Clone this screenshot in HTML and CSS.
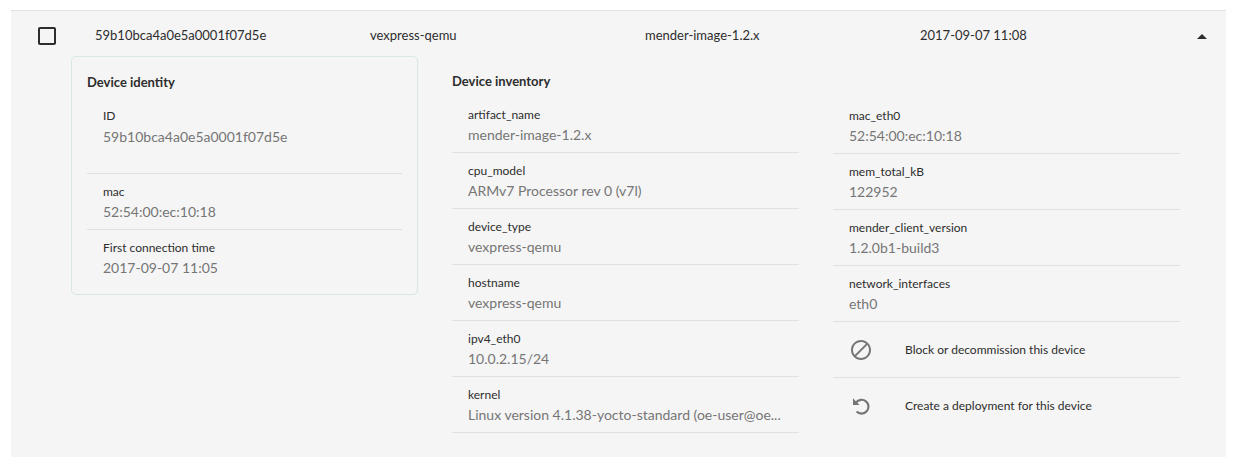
FILE: index.html
```html
<!DOCTYPE html>
<html lang="en">
<head>
<meta charset="utf-8">
<title>Devices</title>
<link rel="stylesheet" href="styles.css">
</head>
<body>
<section class="device">
  <header class="summary">
    <span class="check"><svg width="24" height="24" viewBox="0 0 24 24"><path d="M19 5v14H5V5h14m0-2H5c-1.100 0-2 .900-2 2v14c0 1.100.900 2 2 2h14c1.100 0 2-.900 2-2V5c0-1.100-.900-2-2-2z"/></svg></span>
    <span class="cell">59b10bca4a0e5a0001f07d5e</span>
    <span class="cell">vexpress-qemu</span>
    <span class="cell">mender-image-1.2.x</span>
    <span class="cell">2017-09-07 11:08</span>
    <span class="arrow"><svg width="24" height="24" viewBox="0 0 24 24"><path d="M7 14l5-5 5 5z"/></svg></span>
  </header>
  <div class="details">
    <div class="identity">
      <h4 class="title">Device identity</h4>
      <ul class="list">
        <li class="item item-id"><div class="label">ID</div><div class="value">59b10bca4a0e5a0001f07d5e</div></li>
        <li class="item"><div class="label">mac</div><div class="value">52:54:00:ec:10:18</div></li>
        <li class="item"><div class="label">First connection time</div><div class="value">2017-09-07 11:05</div></li>
      </ul>
    </div>
    <div class="inventory">
      <h4 class="title">Device inventory</h4>
      <ul class="list">
        <li class="item"><div class="label">artifact_name</div><div class="value">mender-image-1.2.x</div></li>
        <li class="item"><div class="label">cpu_model</div><div class="value">ARMv7 Processor rev 0 (v7l)</div></li>
        <li class="item"><div class="label">device_type</div><div class="value">vexpress-qemu</div></li>
        <li class="item"><div class="label">hostname</div><div class="value">vexpress-qemu</div></li>
        <li class="item"><div class="label">ipv4_eth0</div><div class="value">10.0.2.15/24</div></li>
        <li class="item"><div class="label">kernel</div><div class="value">Linux version 4.1.38-yocto-standard (oe-user@oe...</div></li>
      </ul>
    </div>
    <div class="inventory inventory-more">
      <ul class="list">
        <li class="item"><div class="label">mac_eth0</div><div class="value">52:54:00:ec:10:18</div></li>
        <li class="item"><div class="label">mem_total_kB</div><div class="value">122952</div></li>
        <li class="item"><div class="label">mender_client_version</div><div class="value">1.2.0b1-build3</div></li>
        <li class="item"><div class="label">network_interfaces</div><div class="value">eth0</div></li>
        <li class="item action"><svg width="24" height="24" viewBox="0 0 24 24"><path d="M12 2C6.480 2 2 6.480 2 12s4.480 10 10 10 10-4.480 10-10S17.520 2 12 2zM4 12c0-4.420 3.580-8 8-8 1.850 0 3.550.630 4.900 1.690L5.690 16.900C4.630 15.550 4 13.850 4 12zm8 8c-1.850 0-3.550-.630-4.900-1.690L18.310 7.100C19.370 8.450 20 10.150 20 12c0 4.420-3.580 8-8 8z"/></svg><span class="label">Block or decommission this device</span></li>
        <li class="item action"><svg width="24" height="24" viewBox="0 0 24 24"><path d="M4 4.300V11H10.500Z"/><path class="arc" d="M7 8.600A6.900 6.900 0 1 1 7.600 17.400"/></svg><span class="label">Create a deployment for this device</span></li>
      </ul>
    </div>
  </div>
</section>
</body>
</html>
```
FILE: styles.css
```css
* { box-sizing: border-box; }
body {
  margin: 0;
  padding: 10px 28px 0 11px;
  background: #fff;
  color: #2d2d2d;
  font-family: Lato, "Liberation Sans", sans-serif;
}
svg { display: block; flex: none; }
.device {
  height: 447px;
  background: #f5f5f5;
  border-top: 1px solid #e0e0e0;
}
.summary {
  display: flex;
  height: 45px;
  padding: 2px 12px 0 24px;
  font-size: 13px;
  line-height: 45px;
}
.check { width: 60px; padding-top: 11px; }
.check path, .arrow path { fill: #2d2d2d; }
.cell { width: 275px; }
.cell, .check, .arrow { flex: none; }
.arrow { margin-left: -5px; padding-top: 12px; }
.details { display: flex; padding-left: 60px; }
.identity {
  width: 347px;
  height: 239px;
  padding: 15px;
  border: 1px solid #d5e8e4;
  border-radius: 5px;
}
.inventory { width: 347px; margin-left: 34px; padding-top: 15px; }
.inventory-more { padding-top: 42px; }
.title { margin: 0; height: 26px; font-size: 13px; line-height: 20px; font-weight: 700; }
.list { margin: 0; padding: 0; list-style: none; }
.item {
  height: 56px;
  padding: 11px 16px 0;
  border-bottom: 1px solid #e0e0e0;
}
.identity .item:last-child, .action:last-child { border-bottom: 0; }
.item-id { height: 76px; }
.label { font-size: 12px; line-height: 14px; }
.value { margin-top: 4px; font-size: 14px; line-height: 18px; color: #757575; white-space: nowrap; }
.item-id .value { margin-top: 5px; }
.action { display: flex; align-items: center; gap: 32px; padding: 0 16px; }
.action path { fill: #757575; }
.action .arc { fill: none; stroke: #757575; stroke-width: 2.2; }
```
